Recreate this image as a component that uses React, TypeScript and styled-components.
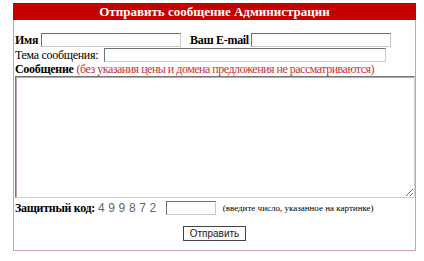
import React from 'react'
import { createGlobalStyle, styled } from 'styled-components'

const GlobalStyle = createGlobalStyle`
    body {
        margin: 0;
        background: #fff;
        font-family: "Liberation Serif", "Times New Roman", serif;
        font-size: 12px;
        color: #000;
    }
`

const Page = styled.div`
    padding: 3px 0 0 13px;
`

const Box = styled.form`
    width: 401px;
    height: 247px;
    border: 1px solid #c9a3aa;
    border-top: none;
    display: flex;
    flex-direction: column;
`

const Title = styled.div`
    height: 17px;
    margin: 0 -1px;
    background: #c40000;
    color: #fff;
    font-weight: bold;
    font-size: 13px;
    line-height: 17px;
    text-align: center;
`

const Body = styled.div`
    display: flex;
    flex-direction: column;
    padding: 0 1px;
    font-size: 12px;
    letter-spacing: -0.3px;
`

const Row = styled.div<{ $top?: number }>`
    display: flex;
    align-items: center;
    height: 14px;
    margin-top: ${p => p.$top ?? 0}px;
`

const Label = styled.span<{ $bold?: boolean; $gap?: number }>`
    font-weight: ${p => (p.$bold ? 'bold' : 'normal')};
    white-space: nowrap;
    margin-right: ${p => p.$gap ?? 2}px;
`

const Hint = styled.span`
    color: #cc3333;
    margin-left: 3px;
    letter-spacing: -0.5px;
    white-space: nowrap;
`

const Field = styled.input<{ $w: number; $gapAfter?: number }>`
    box-sizing: border-box;
    width: ${p => p.$w}px;
    height: 14px;
    padding: 0 2px;
    border: 1px solid #6f6f6f;
    border-right-color: #c8c8c8;
    border-bottom-color: #c8c8c8;
    background: #fff;
    margin: 0 ${p => p.$gapAfter ?? 0}px 0 0;
    font: 12px "Liberation Serif", serif;
`

const Message = styled.textarea`
    box-sizing: border-box;
    width: 400px;
    height: 122px;
    margin: 0;
    border: 1px solid #777;
    border-right-color: #d0d0d0;
    border-bottom-color: #d0d0d0;
    box-shadow: inset 1px 1px 0 #b9a6a9;
    font: 12px "Liberation Serif", serif;
    resize: both;
`

const Code = styled.span`
    font-family: "Liberation Sans", Arial, sans-serif;
    font-size: 12px;
    color: #666;
    letter-spacing: 3.6px;
    margin: 0 6px 0 3px;
`

const Small = styled.span`
    font-size: 9px;
    letter-spacing: 0;
    margin-left: 7px;
    white-space: nowrap;
`

const Actions = styled.div`
    display: flex;
    justify-content: center;
    margin-top: 11px;
`

const Submit = styled.button`
    box-sizing: border-box;
    width: 63px;
    height: 15px;
    padding: 0;
    border: 1px solid #444;
    background: #fcfcfc;
    font-family: "Liberation Sans", Arial, sans-serif;
    font-size: 10px;
    color: #222;
    line-height: 13px;
`

const App: React.FC = () => {
    return (
        <Page>
            <GlobalStyle />
            <Box onSubmit={e => e.preventDefault()}>
                <Title>Отправить сообщение Администрации</Title>
                <Body>
                    <Row $top={13}>
                        <Label $bold $gap={3}>Имя</Label>
                        <Field $w={140} $gapAfter={9} />
                        <Label $bold $gap={2}>Ваш E-mail</Label>
                        <Field $w={140} />
                    </Row>
                    <Row $top={1}>
                        <Label $gap={6}>Тема сообщения:</Label>
                        <Field $w={282} />
                    </Row>
                    <Row>
                        <Label $bold $gap={0}>Сообщение</Label>
                        <Hint>(без указания цены и домена предложения не рассматриваются)</Hint>
                    </Row>
                    <Message />
                    <Row $top={3}>
                        <Label $bold $gap={0}>Защитный код:</Label>
                        <Code>499872</Code>
                        <Field $w={50} />
                        <Small>(введите число, указанное на картинке)</Small>
                    </Row>
                    <Actions>
                        <Submit type="submit">Отправить</Submit>
                    </Actions>
                </Body>
            </Box>
        </Page>
    )
}

export default App
